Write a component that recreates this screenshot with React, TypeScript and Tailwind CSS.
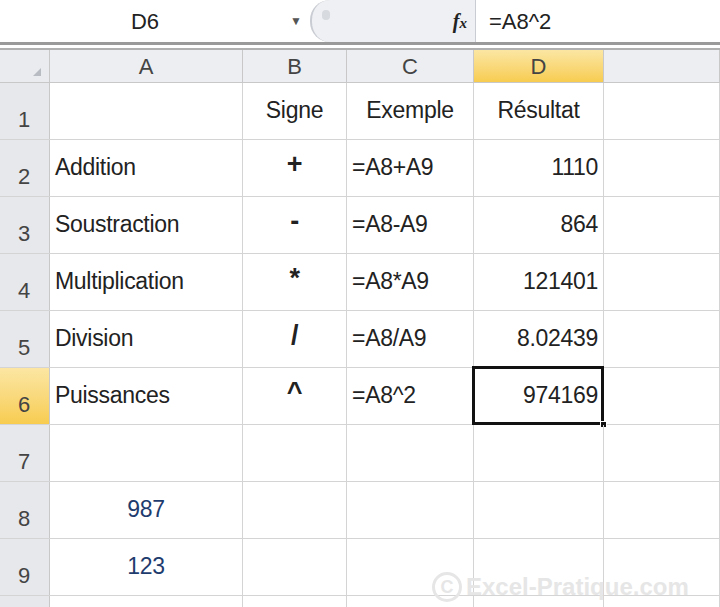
import React from "react";

const cols = [
  { w: "w-[193px]", l: "A" },
  { w: "w-[104px]", l: "B" },
  { w: "w-[127px]", l: "C" },
  { w: "w-[130px]", l: "D" },
  { w: "flex-1", l: "" },
];

type Cell = { t?: string; a?: "l" | "c" | "r"; bold?: boolean; blue?: boolean; big?: boolean };
const rows: Cell[][] = [
  [{}, { t: "Signe", a: "c" }, { t: "Exemple", a: "c" }, { t: "Résultat", a: "c" }],
  [{ t: "Addition" }, { t: "+", a: "c", bold: true, big: true }, { t: "=A8+A9" }, { t: "1110", a: "r" }],
  [{ t: "Soustraction" }, { t: "-", a: "c", bold: true, big: true }, { t: "=A8-A9" }, { t: "864", a: "r" }],
  [{ t: "Multiplication" }, { t: "*", a: "c", bold: true, big: true }, { t: "=A8*A9" }, { t: "121401", a: "r" }],
  [{ t: "Division" }, { t: "/", a: "c", bold: true, big: true }, { t: "=A8/A9" }, { t: "8.02439", a: "r" }],
  [{ t: "Puissances" }, { t: "^", a: "c", bold: true, big: true }, { t: "=A8^2" }, { t: "974169", a: "r" }],
  [{}, {}, {}, {}],
  [{ t: "987", a: "c", blue: true }, {}, {}, {}],
  [{ t: "123", a: "c", blue: true }, {}, {}, {}],
  [{}, {}, {}, {}],
];

export default function App() {
  return (
    <div className="w-[720px] h-[607px] overflow-hidden bg-white text-[#222]" style={{ fontFamily: '"Liberation Sans", Arial, sans-serif' }}>
      <div className="flex h-[42px] items-center bg-white text-[22px]">
        <div className="w-[290px] text-center">D6</div>
        <span className="text-[12px] text-[#555] w-[20px]">▼</span>
        <div className="relative h-[42px] w-[165px] bg-[#eef0f3] rounded-l-[20px] border-l-2 border-[#c9ccd2] flex items-center justify-end pr-[8px]">
          <span className="absolute left-[10px] top-[10px] w-[8px] h-[10px] rounded-full bg-[#d7dade]" />
          <span className="italic font-bold text-[20px]" style={{ fontFamily: '"Liberation Serif", serif' }}>f<span className="text-[15px]">x</span></span>
        </div>
        <div className="h-[42px] border-l border-[#c9ccd2] pl-[13px] flex items-center">=A8^2</div>
      </div>
      <div className="h-[3px] bg-[#9a9a9a]" />
      <div className="h-[3px] bg-white" />
      <div className="h-[2px] bg-[#b0b0b0]" />
      <div className="flex h-[33px] border-b border-[#c8c8c8] text-[22px] text-[#444]">
        <div className="w-[50px] bg-[#e9ebee] border-r border-[#c8c8c8] relative">
          <span className="absolute right-[8px] bottom-[6px] w-0 h-0 border-l-[8px] border-l-transparent border-b-[8px] border-b-[#b8bcc2]" />
        </div>
        {cols.map((c, i) => (
          <div key={i} className={`${c.w} flex items-center justify-center border-r border-[#c8c8c8] ${c.l === "D" ? "bg-gradient-to-b from-[#fbe6a2] to-[#f7cc4e]" : "bg-[#eceef1]"}`}>{c.l}</div>
        ))}
      </div>
      {rows.map((r, ri) => (
        <div key={ri} className="flex h-[57px] border-b border-[#d4d4d4]">
          <div className={`w-[50px] shrink-0 flex items-end pb-[3px] pl-[18px] text-[22px] text-[#444] border-r border-[#c8c8c8] ${ri === 5 ? "bg-gradient-to-b from-[#fbe6a2] to-[#f7cc4e]" : "bg-[#e6e8eb]"}`}>{ri < 9 ? ri + 1 : ""}</div>
          {cols.map((c, ci) => {
            const cell = r[ci] || {};
            const sel = ri === 5 && ci === 3;
            return (
              <div key={ci} className={`${c.w} relative flex items-center border-r border-[#d4d4d4] text-[23px] tracking-[-0.3px] px-[5px] ${cell.a === "c" ? "justify-center" : cell.a === "r" ? "justify-end" : "justify-start"} ${cell.blue ? "text-[#1f3c6e]" : ""}`}>
                <span className={`${cell.bold ? "font-bold text-[27px] -mt-[8px]" : "-mt-[2px]"}`}>{cell.t}</span>
                {sel && (
                  <>
                    <div className="absolute -left-[2px] -top-[2px] -right-[1px] -bottom-[1px] border-[3px] border-[#111]" />
                    <div className="absolute -right-[4px] -bottom-[4px] w-[7px] h-[7px] bg-[#111] border border-white" />
                  </>
                )}
              </div>
            );
          })}
        </div>
      ))}
      <div className="relative">
        <div className="absolute left-[432px] -top-[84px] text-[24px] font-bold text-[#e6e6e6] flex items-center gap-[4px]">
          <span className="w-[30px] h-[30px] rounded-full border-[3px] border-[#e6e6e6] flex items-center justify-center text-[18px]">C</span>
          Excel-Pratique.com
        </div>
      </div>
    </div>
  );
}
